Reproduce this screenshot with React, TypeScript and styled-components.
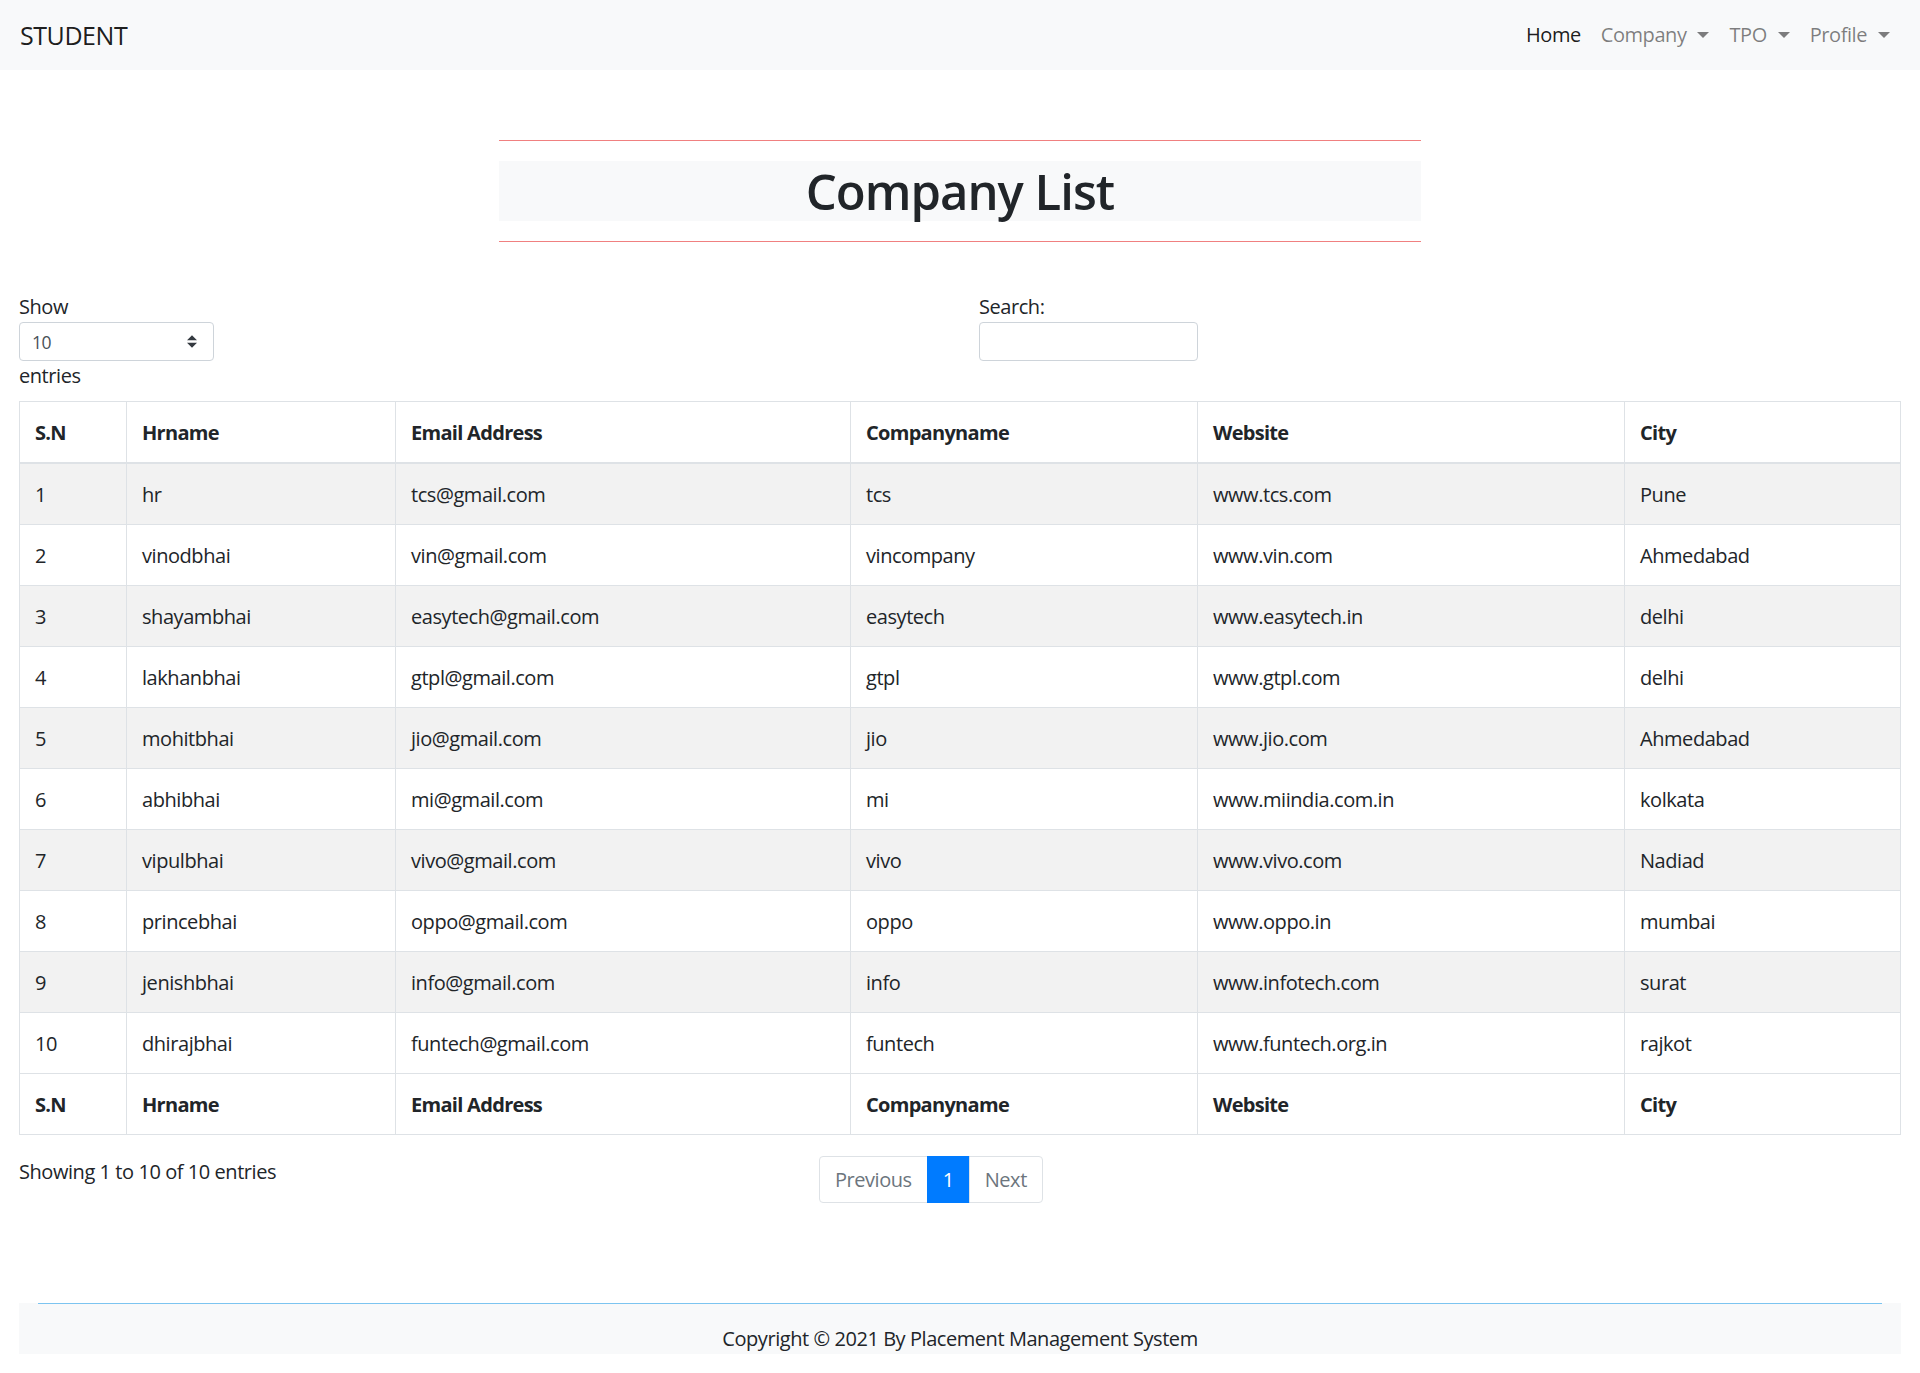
import React from 'react'
import styled, { createGlobalStyle } from 'styled-components'

const GlobalStyle = createGlobalStyle`
  html, body {
    margin: 0;
    padding: 0;
    background: #fff;
  }
  body {
    font-family: "Open Sans", "Noto Sans", "Liberation Sans", sans-serif;
    font-size: 20px;
    line-height: 30px;
    letter-spacing: -0.022em;
    color: #212529;
  }
  * {
    box-sizing: border-box;
  }
`

interface Company {
  hr: string
  email: string
  company: string
  website: string
  city: string
}

const companies: Company[] = [
  { hr: 'hr', email: 'tcs@gmail.com', company: 'tcs', website: 'www.tcs.com', city: 'Pune' },
  { hr: 'vinodbhai', email: 'vin@gmail.com', company: 'vincompany', website: 'www.vin.com', city: 'Ahmedabad' },
  { hr: 'shayambhai', email: 'easytech@gmail.com', company: 'easytech', website: 'www.easytech.in', city: 'delhi' },
  { hr: 'lakhanbhai', email: 'gtpl@gmail.com', company: 'gtpl', website: 'www.gtpl.com', city: 'delhi' },
  { hr: 'mohitbhai', email: 'jio@gmail.com', company: 'jio', website: 'www.jio.com', city: 'Ahmedabad' },
  { hr: 'abhibhai', email: 'mi@gmail.com', company: 'mi', website: 'www.miindia.com.in', city: 'kolkata' },
  { hr: 'vipulbhai', email: 'vivo@gmail.com', company: 'vivo', website: 'www.vivo.com', city: 'Nadiad' },
  { hr: 'princebhai', email: 'oppo@gmail.com', company: 'oppo', website: 'www.oppo.in', city: 'mumbai' },
  { hr: 'jenishbhai', email: 'info@gmail.com', company: 'info', website: 'www.infotech.com', city: 'surat' },
  { hr: 'dhirajbhai', email: 'funtech@gmail.com', company: 'funtech', website: 'www.funtech.org.in', city: 'rajkot' },
]

const columns = ['S.N', 'Hrname', 'Email Address', 'Companyname', 'Website', 'City']
const columnWidths = [107, 269, 455, 347, 427, 276]

const Navbar = styled.nav`
  display: flex;
  align-items: center;
  justify-content: space-between;
  height: 70px;
  padding: 10px 20px;
  background: #f8f9fa;
`

const Brand = styled.div`
  font-size: 25px;
  line-height: 37px;
  color: rgba(0, 0, 0, 0.9);
`

const NavList = styled.ul`
  display: flex;
  list-style: none;
  margin: 0;
  padding: 0;
`

const NavLink = styled.li<{ active?: boolean }>`
  display: flex;
  align-items: center;
  padding: 10px;
  color: ${(props) => (props.active ? 'rgba(0, 0, 0, 0.9)' : 'rgba(0, 0, 0, 0.5)')};
`

const Caret = styled.span`
  display: inline-block;
  margin-left: 11px;
  border-top: 6px solid;
  border-left: 6px solid transparent;
  border-right: 6px solid transparent;
`

const Main = styled.main`
  padding: 0 19px;
`

const TitleWrap = styled.section`
  width: 49%;
  margin: 70px auto 0;
`

const RedRule = styled.hr`
  margin: 0;
  border: 0;
  border-top: 1px solid #f08080;
`

const Title = styled.h1`
  margin: 20px 0;
  height: 60px;
  background: #f8f9fa;
  font-size: 49px;
  line-height: 60px;
  font-weight: 600;
  letter-spacing: -0.02em;
  text-align: center;
`

const ControlsRow = styled.div`
  display: grid;
  grid-template-columns: 1fr 1fr;
  gap: 38px;
  margin-top: 50px;
`

const Label = styled.label`
  display: block;
  font-size: 20px;
  line-height: 30px;
`

const SelectBox = styled.div`
  display: flex;
  align-items: center;
  justify-content: space-between;
  width: 195px;
  height: 39px;
  padding: 0 16px 0 12px;
  border: 1px solid #ced4da;
  border-radius: 4px;
  font-size: 17.5px;
  color: #495057;
`

const SearchInput = styled.input`
  display: block;
  width: 219px;
  height: 39px;
  border: 1px solid #ced4da;
  border-radius: 4px;
  font: inherit;
`

const Table = styled.table`
  width: 100%;
  margin-top: 10px;
  border-collapse: collapse;
  table-layout: fixed;
  border: 1px solid #dee2e6;
`

const HeadCell = styled.th<{ thick?: boolean }>`
  padding: 16px 15px 14px;
  text-align: left;
  font-weight: 700;
  letter-spacing: -0.035em;
  border: 1px solid #dee2e6;
  border-bottom-width: ${(props) => (props.thick ? '2px' : '1px')};
`

const Row = styled.tr<{ striped: boolean }>`
  background: ${(props) => (props.striped ? '#f2f2f2' : '#fff')};
`

const Cell = styled.td`
  padding: 16px 15px 14px;
  border: 1px solid #dee2e6;
`

const PagerRow = styled.div`
  display: grid;
  grid-template-columns: 5fr 7fr;
  gap: 27px;
  margin-top: 19px;
`

const Info = styled.div`
  padding-top: 3px;
`

const Pagination = styled.ul`
  display: flex;
  list-style: none;
  margin: 2px 0 0;
  padding: 0;
`

const PageItem = styled.li<{ active?: boolean; first?: boolean; last?: boolean }>`
  padding: 10px 15px;
  line-height: 25px;
  border: 1px solid ${(props) => (props.active ? '#007bff' : '#dee2e6')};
  margin-left: ${(props) => (props.first ? '0' : '-1px')};
  background: ${(props) => (props.active ? '#007bff' : '#fff')};
  color: ${(props) => (props.active ? '#fff' : '#6c757d')};
  border-radius: ${(props) => (props.first ? '4px 0 0 4px' : props.last ? '0 4px 4px 0' : '0')};
`

const Footer = styled.footer`
  margin: 100px 19px 20px;
  background: #f8f9fa;
`

const BlueRule = styled.hr`
  margin: 0 19px;
  border: 0;
  border-top: 1px solid #7cc4f0;
`

const Copyright = styled.p`
  margin: 0;
  padding: 20px 0 0;
  text-align: center;
`

const SortArrows = () => (
  <svg width="10" height="13" viewBox="0 0 4 5">
    <path d="M2 0L0 2h4zm0 5L0 3h4z" fill="#343a40" />
  </svg>
)

const App: React.FC = () => {
  return (
    <>
      <GlobalStyle />
      <Navbar>
        <Brand>STUDENT</Brand>
        <NavList>
          <NavLink active>Home</NavLink>
          <NavLink>
            Company
            <Caret />
          </NavLink>
          <NavLink>
            TPO
            <Caret />
          </NavLink>
          <NavLink>
            Profile
            <Caret />
          </NavLink>
        </NavList>
      </Navbar>
      <Main>
        <TitleWrap>
          <RedRule />
          <Title>Company List</Title>
          <RedRule />
        </TitleWrap>
        <ControlsRow>
          <Label>
            Show
            <SelectBox>
              10
              <SortArrows />
            </SelectBox>
            entries
          </Label>
          <Label>
            Search:
            <SearchInput type="search" />
          </Label>
        </ControlsRow>
        <Table>
          <colgroup>
            {columnWidths.map((w, i) => (
              <col key={i} style={{ width: w }} />
            ))}
          </colgroup>
          <thead>
            <tr>
              {columns.map((c) => (
                <HeadCell key={c} thick>
                  {c}
                </HeadCell>
              ))}
            </tr>
          </thead>
          <tbody>
            {companies.map((c, i) => (
              <Row key={i} striped={i % 2 === 0}>
                <Cell>{i + 1}</Cell>
                <Cell>{c.hr}</Cell>
                <Cell>{c.email}</Cell>
                <Cell>{c.company}</Cell>
                <Cell>{c.website}</Cell>
                <Cell>{c.city}</Cell>
              </Row>
            ))}
          </tbody>
          <tfoot>
            <tr>
              {columns.map((c) => (
                <HeadCell key={c}>{c}</HeadCell>
              ))}
            </tr>
          </tfoot>
        </Table>
        <PagerRow>
          <Info>Showing 1 to 10 of 10 entries</Info>
          <Pagination>
            <PageItem first>Previous</PageItem>
            <PageItem active>1</PageItem>
            <PageItem last>Next</PageItem>
          </Pagination>
        </PagerRow>
      </Main>
      <Footer>
        <BlueRule />
        <Copyright>Copyright © 2021 By Placement Management System</Copyright>
      </Footer>
    </>
  )
}

export default App
